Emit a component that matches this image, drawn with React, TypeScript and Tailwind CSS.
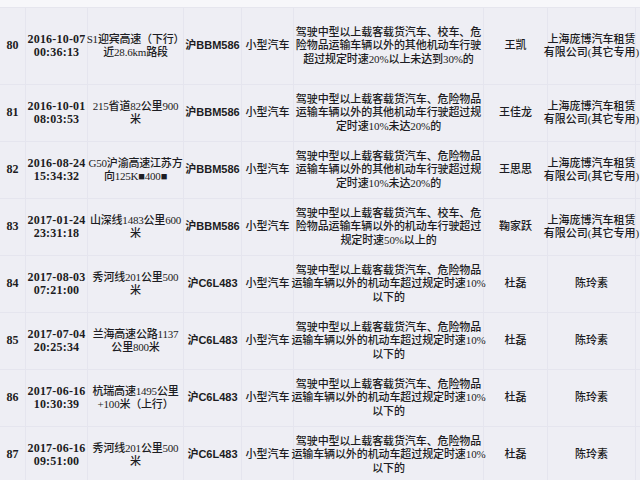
import React from 'react'

interface Row {
  no: string
  date: string[]
  place: string[]
  plate: string
  kind: string
  act: string[]
  name: string
  owner: string[]
}

const actA = ['驾驶中型以上载客载货汽车、危险物品', '运输车辆以外的其他机动车行驶超过规', '定时速10%未达20%的']
const actB = ['驾驶中型以上载客载货汽车、危险物品', '运输车辆以外的机动车超过规定时速10%', '以下的']
const company = ['上海庞博汽车租赁', '有限公司(其它专用)']

const rows: Row[] = [
  {
    no: '80',
    date: ['2016-10-07', '00:36:13'],
    place: ['S1迎宾高速（下行）', '近28.6km路段'],
    plate: '沪BBM586',
    kind: '小型汽车',
    act: ['驾驶中型以上载客载货汽车、校车、危', '险物品运输车辆以外的其他机动车行驶', '超过规定时速20%以上未达到30%的'],
    name: '王凯',
    owner: company,
  },
  { no: '81', date: ['2016-10-01', '08:03:53'], place: ['215省道82公里900', '米'], plate: '沪BBM586', kind: '小型汽车', act: actA, name: '王佳龙', owner: company },
  { no: '82', date: ['2016-08-24', '15:34:32'], place: ['G50沪渝高速江苏方', '向125K■400■'], plate: '沪BBM586', kind: '小型汽车', act: actA, name: '王思思', owner: company },
  {
    no: '83',
    date: ['2017-01-24', '23:31:18'],
    place: ['山深线1483公里600', '米'],
    plate: '沪BBM586',
    kind: '小型汽车',
    act: ['驾驶中型以上载客载货汽车、校车、危', '险物品运输车辆以外的机动车行驶超过', '规定时速50%以上的'],
    name: '鞠家跃',
    owner: company,
  },
  { no: '84', date: ['2017-08-03', '07:21:00'], place: ['秀河线201公里500', '米'], plate: '沪C6L483', kind: '小型汽车', act: actB, name: '杜磊', owner: ['陈玲素'] },
  { no: '85', date: ['2017-07-04', '20:25:34'], place: ['兰海高速公路1137', '公里800米'], plate: '沪C6L483', kind: '小型汽车', act: actB, name: '杜磊', owner: ['陈玲素'] },
  { no: '86', date: ['2017-06-16', '10:30:39'], place: ['杭瑞高速1495公里', '+100米（上行）'], plate: '沪C6L483', kind: '小型汽车', act: actB, name: '杜磊', owner: ['陈玲素'] },
  { no: '87', date: ['2017-06-16', '09:51:00'], place: ['秀河线201公里500', '米'], plate: '沪C6L483', kind: '小型汽车', act: actB, name: '杜磊', owner: ['陈玲素'] },
]

const serif = "font-['Liberation_Serif','Noto_Sans_CJK_SC',serif]"
const sans = "font-['Liberation_Sans','Noto_Sans_CJK_SC',sans-serif]"

function Cell({ lines, className = '' }: { lines: string[]; className?: string }) {
  return (
    <div className={`flex flex-col items-center justify-center border-r border-b border-[#e5e5ee] text-center whitespace-nowrap ${className}`}>
      {lines.map((l, i) => (
        <span key={i}>{l}</span>
      ))}
    </div>
  )
}

export default function App() {
  return (
    <div className={`w-[640px] h-[480px] overflow-hidden bg-[#eeeef4] text-[#1c1c22] ${serif}`}>
      <div className="h-2 bg-[#f7f7fa] border-b border-[#e6e6ee]" />
      <div className="w-[660px]">
        {rows.map((r, idx) => (
          <div
            key={r.no}
            className={`grid grid-cols-[26px_62px_96px_58px_52px_190px_64px_88px_20px] text-[11px] leading-[13.5px] font-medium ${idx === 0 ? 'h-[77px]' : 'h-[57px]'}`}
          >
            <Cell lines={[r.no]} className="text-[12px] font-semibold" />
            <Cell lines={r.date} className="text-[12px] font-semibold tracking-[0.2px]" />
            <Cell lines={r.place} className="tracking-[-0.2px]" />
            <Cell lines={[r.plate]} className={`${sans} text-[11px] font-semibold`} />
            <Cell lines={[r.kind]} />
            <Cell lines={r.act} className="tracking-[-0.1px]" />
            <Cell lines={[r.name]} />
            <Cell lines={r.owner} />
            <div className="border-b border-[#e5e5ee]" />
          </div>
        ))}
      </div>
    </div>
  )
}
